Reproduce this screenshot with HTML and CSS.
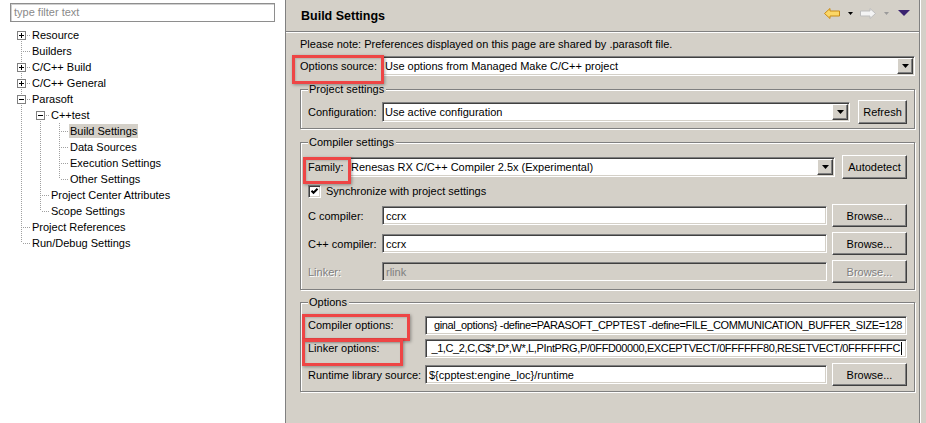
FILE: index.html
```html
<!DOCTYPE html>
<html>
<head>
<meta charset="utf-8">
<title>Build Settings</title>
<link rel="stylesheet" href="styles.css">
</head>
<body>
<div class="window">
  <aside class="nav">
    <div class="filter">type filter text</div>
    <ul class="tree">
      <li class="row"><span class="c first"><span class="box plus"></span></span><span class="lbl">Resource</span></li>
      <li class="row"><span class="c"></span><span class="lbl">Builders</span></li>
      <li class="row"><span class="c"><span class="box plus"></span></span><span class="lbl">C/C++ Build</span></li>
      <li class="row"><span class="c"><span class="box plus"></span></span><span class="lbl">C/C++ General</span></li>
      <li class="row"><span class="c"><span class="box minus"></span></span><span class="lbl">Parasoft</span></li>
      <li class="row"><span class="g"></span><span class="c first"><span class="box minus"></span></span><span class="lbl">C++test</span></li>
      <li class="row"><span class="g"></span><span class="g"></span><span class="c"></span><span class="lbl sel">Build Settings</span></li>
      <li class="row"><span class="g"></span><span class="g"></span><span class="c"></span><span class="lbl">Data Sources</span></li>
      <li class="row"><span class="g"></span><span class="g"></span><span class="c"></span><span class="lbl">Execution Settings</span></li>
      <li class="row"><span class="g"></span><span class="g"></span><span class="c last"></span><span class="lbl">Other Settings</span></li>
      <li class="row"><span class="g"></span><span class="c"></span><span class="lbl">Project Center Attributes</span></li>
      <li class="row"><span class="g"></span><span class="c last"></span><span class="lbl">Scope Settings</span></li>
      <li class="row"><span class="c"></span><span class="lbl">Project References</span></li>
      <li class="row"><span class="c last"></span><span class="lbl">Run/Debug Settings</span></li>
    </ul>
  </aside>

  <main class="page">
    <header class="head">
      <h1 class="title">Build Settings</h1>
      <div class="navicons">
        <svg class="ic-back" width="16" height="11" viewBox="0 0 16 11"><polygon points="0.5,5.5 6,0.5 6,3 15.5,3 15.5,8 6,8 6,10.5" fill="#fcd767" stroke="#c98b17" stroke-width="1"/></svg>
        <svg class="ic-tri" width="5" height="3" viewBox="0 0 5 3"><polygon points="0,0 5,0 2.5,3" fill="#000"/></svg>
        <svg class="ic-fwd" width="16" height="11" viewBox="0 0 16 11"><polygon points="15.5,5.5 10,0.5 10,3 0.5,3 0.5,8 10,8 10,10.5" fill="#f4f4f4" stroke="#bdbdbd" stroke-width="1"/></svg>
        <svg class="ic-tri2" width="5" height="3" viewBox="0 0 5 3"><polygon points="0,0 5,0 2.5,3" fill="#9a9a9a"/></svg>
        <svg class="ic-menu" width="12" height="6" viewBox="0 0 12 6"><polygon points="0,0 12,0 6,6" fill="#3a2370"/></svg>
      </div>
    </header>

    <div class="content">
      <p class="note">Please note: Preferences displayed on this page are shared by .parasoft file.</p>

      <div class="frow src">
        <span class="lab w-src"><span class="hl hl-src">Options source:</span></span>
        <div class="combo grow"><span class="ctext">Use options from Managed Make C/C++ project</span><span class="drop"><svg width="7" height="4" viewBox="0 0 7 4"><polygon points="0,0 7,0 3.5,4" fill="#000"/></svg></span></div>
      </div>

      <fieldset class="group g-proj">
        <legend>Project settings</legend>
        <div class="frow r24 mt4">
          <span class="lab w74">Configuration:</span>
          <div class="combo w-conf"><span class="ctext">Use active configuration</span><span class="drop"><svg width="7" height="4" viewBox="0 0 7 4"><polygon points="0,0 7,0 3.5,4" fill="#000"/></svg></span></div>
          <span class="btn w-refresh">Refresh</span>
        </div>
      </fieldset>

      <fieldset class="group g-comp">
        <legend>Compiler settings</legend>
        <div class="frow r24 mt6">
          <span class="lab w40"><span class="hl hl-fam">Family:</span></span>
          <div class="combo w-fam"><span class="ctext">Renesas RX C/C++ Compiler 2.5x (Experimental)</span><span class="drop"><svg width="7" height="4" viewBox="0 0 7 4"><polygon points="0,0 7,0 3.5,4" fill="#000"/></svg></span></div>
          <span class="btn w-auto">Autodetect</span>
        </div>
        <div class="frow r14 mt5">
          <span class="chk"><svg width="9" height="9" viewBox="0 0 9 9"><polyline points="1.5,3.8 3.5,5.8 7.5,1.8" fill="none" stroke="#000" stroke-width="2"/></svg></span>
          <span class="chklbl">Synchronize with project settings</span>
        </div>
        <div class="frow r23 mt6">
          <span class="lab w74">C compiler:</span>
          <div class="field w-path">ccrx</div>
          <span class="btn w-browse">Browse...</span>
        </div>
        <div class="frow r23 mt5">
          <span class="lab w74">C++ compiler:</span>
          <div class="field w-path">ccrx</div>
          <span class="btn w-browse">Browse...</span>
        </div>
        <div class="frow r23 mt5">
          <span class="lab w74 dis">Linker:</span>
          <div class="field w-path off">rlink</div>
          <span class="btn w-browse dis">Browse...</span>
        </div>
      </fieldset>

      <fieldset class="group g-opts">
        <legend>Options</legend>
        <div class="frow r22 mt5">
          <span class="lab w117"><span class="hl hl-copt">Compiler options:</span></span>
          <div class="field grow scroll"><span class="stext">ginal_options} -define=PARASOFT_CPPTEST -define=FILE_COMMUNICATION_BUFFER_SIZE=128</span></div>
        </div>
        <div class="frow r22 mt1">
          <span class="lab w117"><span class="hl hl-lopt">Linker options:</span></span>
          <div class="field grow scroll"><span class="stext">_1,C_2,C,C$*,D*,W*,L,PIntPRG,P/0FFD00000,EXCEPTVECT/0FFFFFF80,RESETVECT/0FFFFFFFC</span><span class="caret"></span></div>
        </div>
        <div class="frow r23 mt4">
          <span class="lab w117">Runtime library source:</span>
          <div class="field w-rt">${cpptest:engine_loc}/runtime</div>
          <span class="btn w-browse">Browse...</span>
        </div>
      </fieldset>
    </div>
  </main>
</div>
</body>
</html>
```

FILE: styles.css
```css
* { box-sizing: border-box; }

html, body {
  margin: 0;
  padding: 0;
}

body {
  background: #d4d0c8;
  color: #000;
  font-family: "Liberation Sans", Arial, sans-serif;
  font-size: 11px;
  line-height: 14px;
}

.window {
  display: flex;
  width: 926px;
  height: 423px;
  overflow: hidden;
}

/* ---------- left navigation ---------- */
.nav {
  flex: none;
  width: 286px;
  background: #fff;
  border-right: 1px solid #808080;
}

.filter {
  width: 265px;
  height: 19px;
  margin: 3px 0 0 10px;
  padding-left: 3px;
  border: 1px solid #8e8e8e;
  box-shadow: inset 1px 1px #d0d0d0;
  color: #8a8a8a;
  line-height: 17px;
}

.tree {
  list-style: none;
  margin: 5px 0 0;
  padding: 0 0 0 12px;
}

.row {
  display: flex;
  align-items: center;
  height: 16px;
}

.g, .c {
  flex: none;
  display: block;
  width: 19px;
  height: 16px;
  background-repeat: no-repeat;
}

.g {
  background-image: repeating-linear-gradient(to bottom, #a0a0a0 0 1px, transparent 1px 2px);
  background-position: 9px 0;
  background-size: 1px 16px;
}

.c {
  background-image:
    repeating-linear-gradient(to bottom, #a0a0a0 0 1px, transparent 1px 2px),
    repeating-linear-gradient(to right, #a0a0a0 0 1px, transparent 1px 2px);
  background-position: 9px 0, 11px 8px;
  background-size: 1px 16px, 8px 1px;
}

.c.first {
  background-position: 9px 8px, 11px 8px;
  background-size: 1px 8px, 8px 1px;
}

.c.last {
  background-position: 9px 0, 11px 8px;
  background-size: 1px 8px, 8px 1px;
}

.box {
  display: block;
  width: 9px;
  height: 9px;
  margin: 4px 0 0 5px;
  border: 1px solid #808080;
  background-color: #fff;
  background-repeat: no-repeat;
}

.box.plus {
  background-image: linear-gradient(#000, #000), linear-gradient(#000, #000);
  background-position: 1px 3px, 3px 1px;
  background-size: 5px 1px, 1px 5px;
}

.box.minus {
  background-image: linear-gradient(#000, #000);
  background-position: 1px 3px;
  background-size: 5px 1px;
}

.lbl {
  padding: 0 1px;
  line-height: 14px;
  white-space: nowrap;
}

.lbl.sel {
  background: #d4d0c8;
}

/* ---------- right page ---------- */
.page {
  flex: none;
  width: 634px;
  display: flex;
  flex-direction: column;
  border-right: 1px solid #808080;
  box-shadow: 1px 0 #fff;
}

.head {
  flex: none;
  height: 32px;
  display: flex;
  align-items: center;
  justify-content: space-between;
  padding: 0 9px 0 15px;
  border-bottom: 1px solid #808080;
  box-shadow: 0 1px #fff;
}

.title {
  margin: 0;
  font-size: 12.5px;
  font-weight: bold;
  line-height: 16px;
}

.navicons {
  display: flex;
  align-items: center;
  margin-top: -5px;
}

.navicons svg { display: block; }
.ic-tri { margin-left: 8px; }
.ic-fwd { margin-left: 7px; }
.ic-tri2 { margin-left: 8px; }
.ic-menu { margin-left: 9px; }

.content {
  padding: 0 4px 0 14px;
}

.note {
  margin: 5px 0 0;
  height: 14px;
  white-space: nowrap;
}

.frow {
  display: flex;
  align-items: center;
}

.src { height: 21px; margin-top: 4px; }
.r14 { height: 14px; }
.r22 { height: 22px; }
.r23 { height: 23px; }
.r24 { height: 24px; }
.mt1 { margin-top: 1px; }
.mt4 { margin-top: 4px; }
.mt5 { margin-top: 5px; }
.mt6 { margin-top: 6px; }

.lab {
  flex: none;
  white-space: nowrap;
}

.w-src { width: 82px; }
.w40 { width: 40px; }
.w74 { width: 74px; }
.w117 { width: 117px; }

.dis {
  color: #808080;
  text-shadow: 1px 1px #fff;
}

.grow { flex: 1 1 auto; min-width: 0; }

/* sunken controls */
.combo, .field {
  display: flex;
  align-items: center;
  background: #fff;
  border: 1px solid;
  border-color: #808080 #fff #fff #808080;
  box-shadow: inset 1px 1px #404040, inset -1px -1px #d4d0c8;
  white-space: nowrap;
  overflow: hidden;
}

.combo {
  height: 20px;
  padding-left: 2px;
}

.field {
  height: 19px;
  padding-left: 3px;
}

.field.off {
  background: #d4d0c8;
  color: #808080;
}

.ctext {
  flex: 1 1 auto;
  overflow: hidden;
}

.drop {
  flex: none;
  width: 16px;
  height: 16px;
  margin-right: 1px;
  display: flex;
  align-items: center;
  justify-content: center;
  background: #d4d0c8;
  border: 1px solid;
  border-color: #fff #404040 #404040 #fff;
  box-shadow: inset -1px -1px #808080;
}

.drop svg { display: block; }

.w-conf { flex: none; width: 468px; margin-right: 8px; }
.w-fam { flex: none; width: 487px; margin-right: 7px; }
.w-path { flex: none; width: 445px; margin-right: 5px; }
.w-rt { flex: none; width: 402px; margin-right: 5px; }

.scroll {
  justify-content: flex-end;
  padding-right: 4px;
}

.stext {
  flex: none;
  letter-spacing: -0.38px;
}

.caret {
  flex: none;
  width: 1px;
  height: 13px;
  margin-left: 1px;
  background: #000;
}

/* raised buttons */
.btn {
  flex: none;
  display: flex;
  align-items: center;
  justify-content: center;
  height: 23px;
  background: #d4d0c8;
  border: 1px solid;
  border-color: #fff #404040 #404040 #fff;
  box-shadow: inset -1px -1px #808080;
  white-space: nowrap;
}

.r24 .btn { height: 24px; }

.w-refresh { width: 49px; }
.w-auto { width: 65px; }
.w-browse { width: 75px; }

/* checkbox */
.chk {
  flex: none;
  width: 13px;
  height: 13px;
  display: flex;
  align-items: center;
  justify-content: center;
  background: #fff;
  border: 1px solid;
  border-color: #808080 #fff #fff #808080;
  box-shadow: inset 1px 1px #404040, inset -1px -1px #d4d0c8;
}

.chk svg { display: block; }

.chklbl { margin-left: 5px; }

/* group boxes */
.group {
  margin: 6px 0 0;
  padding: 0 7px 4px;
  min-width: 0;
  border: 1px solid #808080;
  box-shadow: inset 1px 1px #fff, 1px 1px #fff;
}

.group legend {
  padding: 0 2px 0 1px;
  line-height: 14px;
  background: #d4d0c8;
}

.g-comp { padding-bottom: 6px; }
.g-opts { margin-top: 5px; padding-bottom: 5px; }

/* red annotation boxes */
.hl {
  position: relative;
  display: inline-block;
  line-height: 14px;
}

.hl::after {
  content: "";
  position: absolute;
  border: 3px solid #ee4545;
  box-shadow: 1px 1px 3px rgba(0, 0, 0, 0.35), inset 1px 1px 2px rgba(0, 0, 0, 0.15);
}

.hl-src::after { left: -8px; top: -4px; width: 86px; height: 23px; }
.hl-fam::after { left: -5px; top: -3px; width: 42px; height: 21px; }
.hl-copt::after { left: -6px; top: -4px; width: 102px; height: 21px; }
.hl-lopt::after { left: -6px; top: -2px; width: 95px; height: 21px; }
```
